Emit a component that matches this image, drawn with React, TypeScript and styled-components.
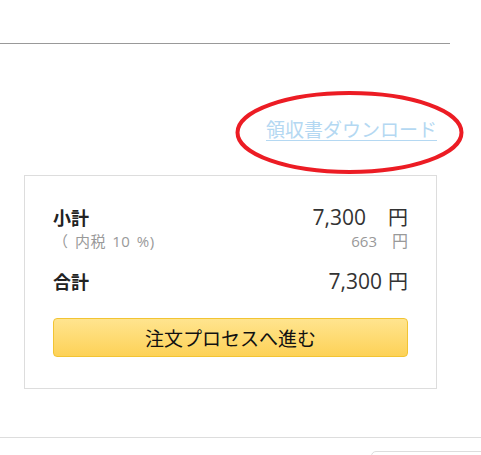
import React from "react";
import styled, { createGlobalStyle } from "styled-components";

const GlobalStyle = createGlobalStyle`
  html, body { margin: 0; padding: 0; background: #fff; }
  body {
    font-family: "Open Sans", "Noto Sans CJK JP", sans-serif;
    color: #333;
  }
`;

const Page = styled.div`
  position: relative;
  width: 481px;
  height: 455px;
  overflow: hidden;
`;

const TopRule = styled.div`
  width: 450px;
  height: 43px;
  border-bottom: 1px solid #999;
`;

const LinkRow = styled.div`
  display: flex;
  justify-content: flex-end;
  padding: 73px 44px 0 0;
`;

const ReceiptLink = styled.a`
  font-family: "Noto Sans CJK JP", sans-serif;
  font-size: 19px;
  line-height: 24px;
  color: #b4d8f2;
  text-decoration: underline;
  text-underline-offset: 3px;
  cursor: pointer;
`;

const Main = styled.div`
  padding: 34px 44px 0 24px;
`;

const SummaryBox = styled.div`
  border: 1px solid #ddd;
  padding: 28px 28px 31px 28px;
  display: flex;
  flex-direction: column;
`;

const Row = styled.div<{ $gap?: number; $lh: number }>`
  display: flex;
  justify-content: space-between;
  align-items: baseline;
  height: ${(p) => p.$lh}px;
  line-height: ${(p) => p.$lh}px;
  margin-top: ${(p) => p.$gap ?? 0}px;
`;

const Label = styled.span`
  font-family: "Noto Sans CJK JP", sans-serif;
  font-weight: 700;
  font-size: 18px;
  color: #222;
`;

const Note = styled.span`
  font-family: "Open Sans", "Noto Sans CJK JP", sans-serif;
  font-size: 15px;
  letter-spacing: 0.5px;
  word-spacing: 2px;
  color: #999;
`;

const Price = styled.span<{ $muted?: boolean }>`
  display: flex;
  align-items: baseline;
  color: ${(p) => (p.$muted ? "#999" : "#333")};
`;

const Amount = styled.span<{ $size: number }>`
  font-size: ${(p) => p.$size}px;
`;

const Unit = styled.span<{ $size: number; $space: number }>`
  font-family: "Noto Sans CJK JP", sans-serif;
  font-size: ${(p) => p.$size}px;
  margin-left: ${(p) => p.$space}px;
`;

const CheckoutButton = styled.button`
  margin-top: 24px;
  height: 39px;
  width: 100%;
  border: 1px solid #f2c433;
  border-radius: 4px;
  background: linear-gradient(to bottom, #ffe48f, #fdd257);
  font-family: "Noto Sans CJK JP", sans-serif;
  font-size: 19px;
  color: #111;
  cursor: pointer;
  padding: 0;
`;

const Footer = styled.div`
  margin-top: 48px;
  border-top: 1px solid #ddd;
  display: flex;
  justify-content: flex-end;
  padding-top: 13px;
`;

const FooterButton = styled.div`
  width: 120px;
  height: 20px;
  margin-right: -12px;
  border: 1px solid #ddd;
  border-radius: 5px;
`;

const Annotation = styled.svg`
  position: absolute;
  left: 234px;
  top: 90px;
  pointer-events: none;
`;

export default function App() {
  return (
    <>
      <GlobalStyle />
      <Page>
        <TopRule />
        <LinkRow>
          <ReceiptLink>領収書ダウンロード</ReceiptLink>
        </LinkRow>
        <Main>
          <SummaryBox>
            <Row $lh={26}>
              <Label>小計</Label>
              <Price>
                <Amount $size={21}>7,300</Amount>
                <Unit $size={20} $space={22}>円</Unit>
              </Price>
            </Row>
            <Row $lh={20}>
              <Note>（ 内税 10 %)</Note>
              <Price $muted>
                <Amount $size={15}>663</Amount>
                <Unit $size={16} $space={15}>円</Unit>
              </Price>
            </Row>
            <Row $lh={26} $gap={18}>
              <Label>合計</Label>
              <Price>
                <Amount $size={21}>7,300</Amount>
                <Unit $size={20} $space={6}>円</Unit>
              </Price>
            </Row>
            <CheckoutButton>注文プロセスへ進む</CheckoutButton>
          </SummaryBox>
        </Main>
        <Footer>
          <FooterButton />
        </Footer>
        <Annotation width="231" height="86" viewBox="0 0 231 86">
          <ellipse cx="115.5" cy="42.5" rx="112" ry="39.5" fill="none" stroke="#ec1c24" strokeWidth="4" />
        </Annotation>
      </Page>
    </>
  );
}
